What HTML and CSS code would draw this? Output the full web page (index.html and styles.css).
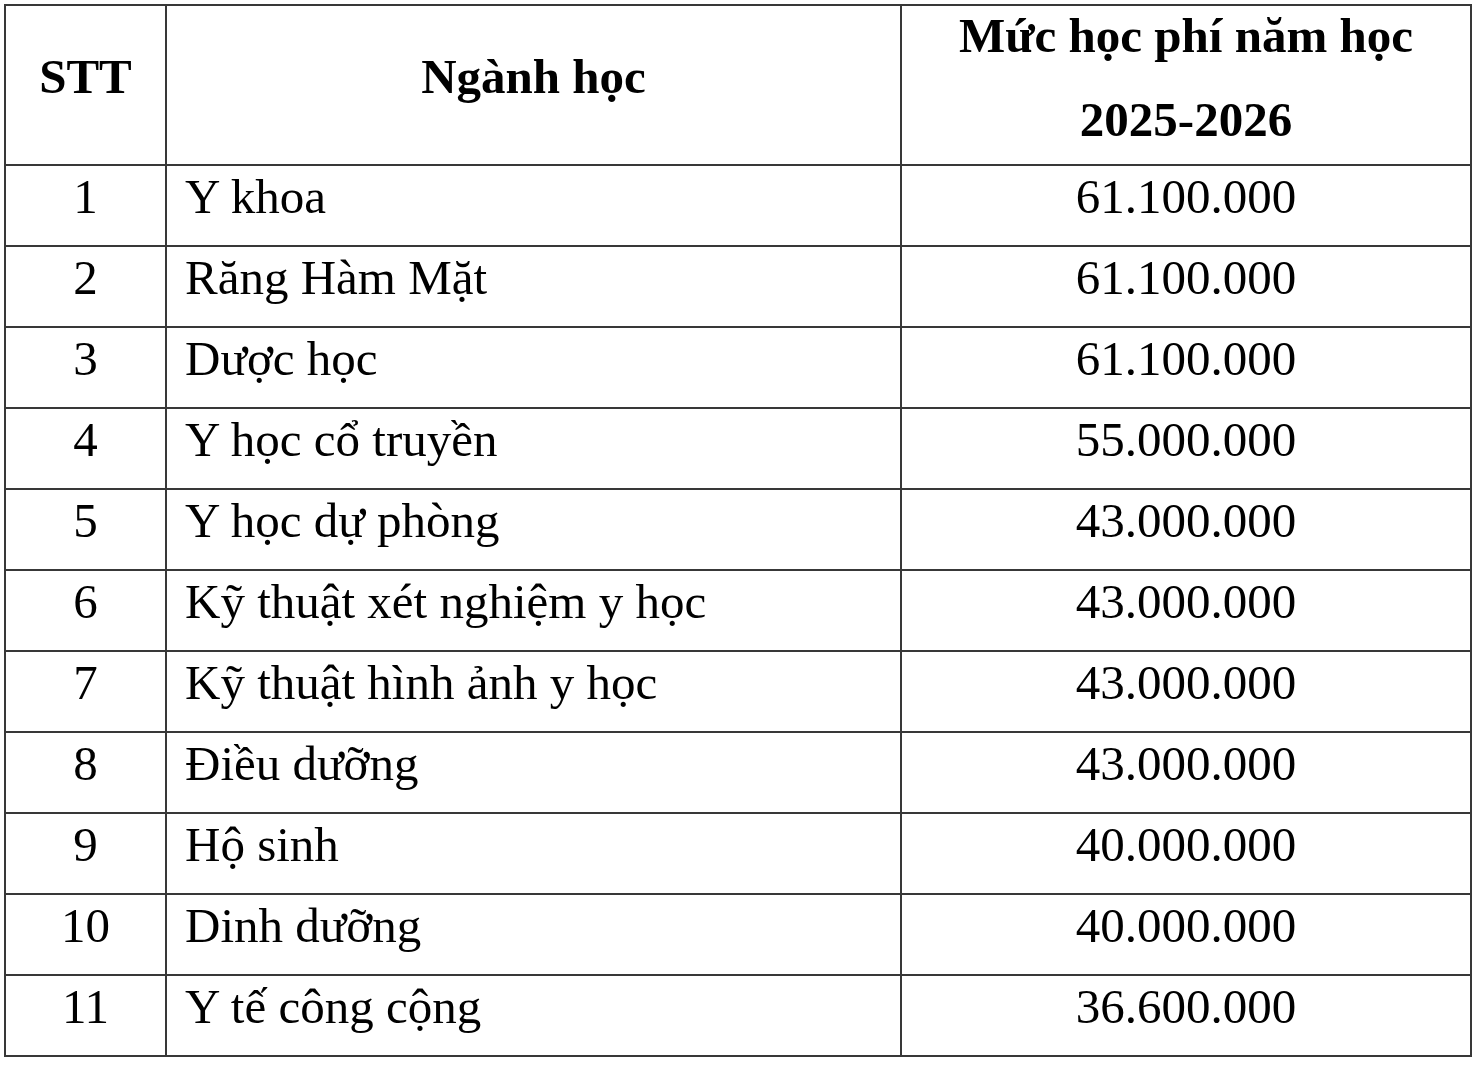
FILE: index.html
```html
<!DOCTYPE html>
<html lang="vi">
<head>
<meta charset="utf-8">
<title>Học phí 2025-2026</title>
<link rel="stylesheet" href="styles.css">
</head>
<body>
<table class="fees">
  <colgroup>
    <col class="c-stt">
    <col class="c-name">
    <col class="c-fee">
  </colgroup>
  <thead>
    <tr class="head-row">
      <th class="stt">STT</th>
      <th class="name-h">Ngành học</th>
      <th class="fee-h"><span class="l1">Mức học phí năm học</span><span class="l2">2025-2026</span></th>
    </tr>
  </thead>
  <tbody>
    <tr><td class="stt">1</td><td class="name">Y khoa</td><td class="fee">61.100.000</td></tr>
    <tr><td class="stt">2</td><td class="name">Răng Hàm Mặt</td><td class="fee">61.100.000</td></tr>
    <tr><td class="stt">3</td><td class="name">Dược học</td><td class="fee">61.100.000</td></tr>
    <tr><td class="stt">4</td><td class="name">Y học cổ truyền</td><td class="fee">55.000.000</td></tr>
    <tr><td class="stt">5</td><td class="name">Y học dự phòng</td><td class="fee">43.000.000</td></tr>
    <tr><td class="stt">6</td><td class="name">Kỹ thuật xét nghiệm y học</td><td class="fee">43.000.000</td></tr>
    <tr><td class="stt">7</td><td class="name">Kỹ thuật hình ảnh y học</td><td class="fee">43.000.000</td></tr>
    <tr><td class="stt">8</td><td class="name">Điều dưỡng</td><td class="fee">43.000.000</td></tr>
    <tr><td class="stt">9</td><td class="name">Hộ sinh</td><td class="fee">40.000.000</td></tr>
    <tr><td class="stt">10</td><td class="name">Dinh dưỡng</td><td class="fee">40.000.000</td></tr>
    <tr><td class="stt">11</td><td class="name">Y tế công cộng</td><td class="fee">36.600.000</td></tr>
  </tbody>
</table>
</body>
</html>
```
FILE: styles.css
```css
html, body {
  margin: 0;
  padding: 0;
  background: #ffffff;
}

body {
  font-family: "Liberation Serif", "Times New Roman", serif;
  color: #000000;
}

.fees {
  margin: 4px 0 0 4px;
  border-collapse: collapse;
  table-layout: fixed;
  width: 1468px;
  font-size: 49px;
}

.c-stt { width: 161px; }
.c-name { width: 735px; }
.c-fee { width: 570px; }

.fees th,
.fees td {
  border: 2px solid #383838;
  padding: 0 0 18px 0;
  vertical-align: middle;
  line-height: normal;
  white-space: nowrap;
}

.head-row {
  height: 160px;
}

.fees tbody tr {
  height: 81px;
}

.fees th {
  font-weight: bold;
  text-align: center;
}

.fees th.fee-h {
  vertical-align: top;
  padding: 3px 0 0 0;
}

.fee-h .l1,
.fee-h .l2 {
  display: block;
  line-height: 54px;
}

.fee-h .l1 {
  margin-bottom: 30px;
}

.fees td.stt {
  text-align: center;
}

.fees td.name {
  text-align: left;
  padding-left: 18px;
}

.fees td.fee {
  text-align: center;
}
```
